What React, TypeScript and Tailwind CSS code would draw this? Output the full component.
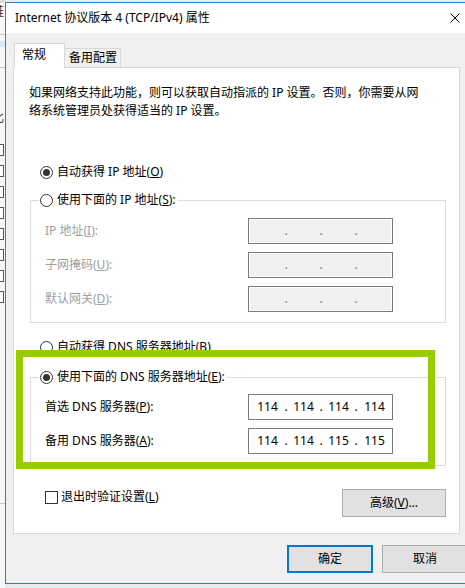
const font = { fontFamily: '"Noto Sans", "Noto Sans CJK SC", sans-serif' };

const Radio = ({ checked, children }: { checked?: boolean; children: React.ReactNode }) => (
  <div className="flex h-[16px] items-center gap-[4px] text-black">
    <span className="flex h-[13px] w-[13px] items-center justify-center rounded-full border border-[#333333] bg-white">
      {checked && <span className="h-[7px] w-[7px] rounded-full bg-[#333333]" />}
    </span>
    <span className="whitespace-nowrap">{children}</span>
  </div>
);

const IpField = ({ value, disabled }: { value?: string[]; disabled?: boolean }) => {
  const parts = value ?? ["", "", "", ""];
  return (
    <div
      className={
        disabled
          ? "flex h-[26px] w-[145px] items-center border border-[#7a7a7a] bg-[#f0f0f0] pl-[1px] text-[#6d6d6d] shadow-[inset_0_0_0_1px_#ffffff]"
          : "flex h-[26px] w-[145px] items-center border border-[#7a7a7a] bg-white pl-[1px] text-black"
      }
    >
      {parts.map((p, i) => (
        <div key={i} className="flex items-center">
          {i > 0 && <span className="w-[4px] text-center">.</span>}
          <span className={i === 0 ? "w-[34px] pl-[1px] text-center" : i === 3 ? "w-[33px] text-center" : "w-[31px] text-center"}>{p}</span>
        </div>
      ))}
    </div>
  );
};

const Row = ({ label, children, grey }: { label: React.ReactNode; children: React.ReactNode; grey?: boolean }) => (
  <div className="grid grid-cols-[203px_145px] items-center">
    <span className={grey ? "whitespace-nowrap text-[#a0a0a0]" : "whitespace-nowrap text-black"}>{label}</span>
    {children}
  </div>
);

export default function App() {
  return (
    <div className="relative flex h-[588px] w-[465px] overflow-hidden bg-[#e9e9e9] text-[12px] leading-[16px]" style={font}>
      {/* background window edge */}
      <div className="flex w-[5px] shrink-0 flex-col bg-[#f7f7f7]">
        <div className="h-[3px] bg-[#dcdcdc]" />
        <span className="-ml-[8px] mt-[1px] text-[12px] text-[#333]">鮭</span>
        <div className="mt-[14px] h-px bg-[#c8c8c8]" />
        <div className="mt-[6px] h-[6px] bg-[#dce8f4]" />
        <div className="mt-[20px] h-px bg-[#c8c8c8]" />
        <span className="-ml-[8px] mt-[42px] text-[#333]">比</span>
        <div className="mt-[18px] flex flex-col gap-[9px]">
          {[0, 1, 2, 3, 4, 5, 6, 7].map((i) => (
            <div key={i} className="h-[12px] w-[4px] border border-l-0 border-[#555] bg-white" />
          ))}
        </div>
        <div className="mt-[200px] h-px bg-[#c8c8c8]" />
      </div>

      {/* dialog */}
      <div className="mt-[2px] flex h-[582px] w-[472px] shrink-0 flex-col border border-[#2a7fd4] bg-[#f0f0f0]">
        <div className="flex h-[30px] items-center justify-between bg-white pl-[9px]">
          <span className="whitespace-nowrap text-black">Internet 协议版本 4 (TCP/IPv4) 属性</span>
          <svg width="10" height="10" viewBox="0 0 10 10" className="mr-[16px]">
            <path d="M0.5 0.5 L9.5 9.5 M9.5 0.5 L0.5 9.5" stroke="#000" strokeWidth="1" />
          </svg>
        </div>

        <div className="flex flex-col pl-[7px] pt-[10px]">
          {/* tabs */}
          <div className="relative z-10 -mb-px ml-[1px] flex h-[25px] items-end">
            <div className="h-[25px] w-[51px] border border-b-0 border-[#d9d9d9] bg-white pl-[7px] pt-[3px] text-black">常规</div>
            <div className="mb-[1px] h-[19px] w-[56px] border border-b-0 border-l-0 border-[#d9d9d9] bg-[#f0f0f0] pl-[4px] pt-[1px] text-black">备用配置</div>
          </div>

          {/* panel */}
          <div className="flex w-[447px] flex-col border border-[#d9d9d9] bg-white pb-[16px] pt-[16px]">
            <p className="ml-[15px] leading-[18px] text-black">
              如果网络支持此功能，则可以获取自动指派的 IP 设置。否则，你需要从网
              <br />
              络系统管理员处获得适当的 IP 设置。
            </p>

            <div className="ml-[26px] mt-[44px]">
              <Radio checked>
                自动获得 IP 地址(<u>O</u>)
              </Radio>
            </div>

            <div className="relative ml-[16px] mt-[20px] flex w-[416px] flex-col gap-[8px] border border-[#dcdcdc] pb-[10px] pl-[14px] pt-[17px]">
              <div className="absolute -top-[9px] left-[8px] bg-white pl-[1px] pr-[2px]">
                <Radio>
                  使用下面的 IP 地址(<u>S</u>):
                </Radio>
              </div>
              <Row grey label={<>IP 地址(<u>I</u>):</>}>
                <IpField disabled />
              </Row>
              <Row grey label={<>子网掩码(<u>U</u>):</>}>
                <IpField disabled />
              </Row>
              <Row grey label={<>默认网关(<u>D</u>):</>}>
                <IpField disabled />
              </Row>
            </div>

            <div className="ml-[26px] mt-[16px]">
              <Radio>
                自动获得 DNS 服务器地址(<u>B</u>)
              </Radio>
            </div>

            <div className="relative ml-[16px] mt-[22px] flex w-[416px] flex-col gap-[8px] border border-[#dcdcdc] pb-[11px] pl-[14px] pt-[16px]">
              <div className="absolute -top-[9px] left-[8px] bg-white pl-[1px] pr-[2px]">
                <Radio checked>
                  使用下面的 DNS 服务器地址(<u>E</u>):
                </Radio>
              </div>
              <Row label={<>首选 DNS 服务器(<u>P</u>):</>}>
                <IpField value={["114", "114", "114", "114"]} />
              </Row>
              <Row label={<>备用 DNS 服务器(<u>A</u>):</>}>
                <IpField value={["114", "114", "115", "115"]} />
              </Row>
            </div>

            <div className="ml-[31px] mt-[23px] flex w-[401px] items-start justify-between">
              <div className="flex h-[16px] items-center gap-[3px] text-black">
                <span className="h-[13px] w-[13px] border border-[#333333] bg-white" />
                <span>
                  退出时验证设置(<u>L</u>)
                </span>
              </div>
              <button className="flex h-[28px] w-[104px] items-center justify-center border border-[#adadad] bg-[#e1e1e1] text-black">
                高级(<u>V</u>)...
              </button>
            </div>
          </div>

          {/* dialog buttons */}
          <div className="ml-[274px] mt-[11px] flex gap-[9px]">
            <button className="flex h-[28px] w-[86px] items-center justify-center border-2 border-[#0078d7] bg-[#e1e1e1] text-black">确定</button>
            <button className="flex h-[28px] w-[86px] items-center justify-center border border-[#adadad] bg-[#e1e1e1] text-black">取消</button>
          </div>
        </div>
      </div>

      {/* highlight annotation */}
      <div className="pointer-events-none absolute left-[16px] top-[350px] h-[119px] w-[419px] border-[7px] border-[#99cc00]" />
    </div>
  );
}
